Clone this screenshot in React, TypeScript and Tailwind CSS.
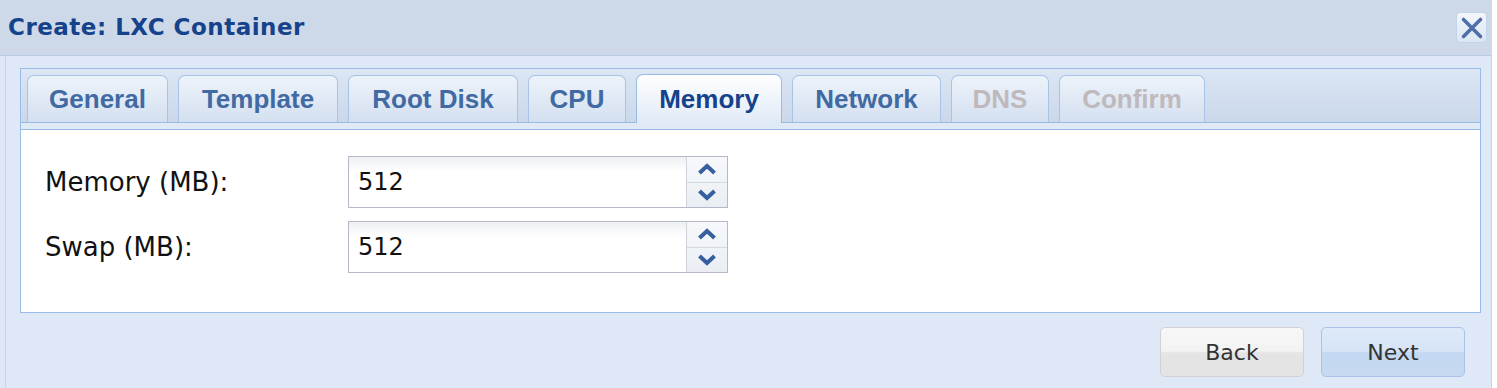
import React from 'react';

const tabs = [
  { label: 'General', w: 'w-[141px]', state: 'idle' },
  { label: 'Template', w: 'w-[160px]', state: 'idle' },
  { label: 'Root Disk', w: 'w-[170px]', state: 'idle' },
  { label: 'CPU', w: 'w-[98px]', state: 'idle' },
  { label: 'Memory', w: 'w-[146px]', state: 'active' },
  { label: 'Network', w: 'w-[149px]', state: 'idle' },
  { label: 'DNS', w: 'w-[98px]', state: 'disabled' },
  { label: 'Confirm', w: 'w-[146px]', state: 'disabled' },
];

function Tab({ label, w, state }: { label: string; w: string; state: string }) {
  if (state === 'active') {
    return (
      <div
        className={`${w} h-[49px] -mb-[1px] flex items-center justify-center rounded-t-[7px] border border-b-0 border-[#99bbe8] bg-gradient-to-b from-white to-[#e0eaf7] text-[#15428b]`}
      >
        {label}
      </div>
    );
  }
  return (
    <div
      className={`${w} h-[47px] flex items-center justify-center rounded-t-[7px] border border-b-0 border-[#a9c3e6] bg-gradient-to-b from-[#edf3fa] to-[#d4e0f0] ${
        state === 'disabled' ? 'text-[#bfb9bd]' : 'text-[#416aa3]'
      }`}
    >
      {label}
    </div>
  );
}

function SpinField({ label, value }: { label: string; value: string }) {
  return (
    <div className="flex items-center h-[52px]">
      <div className="w-[327px] pl-[24px] text-[26px] text-[#111]">{label}</div>
      <div className="flex h-[52px] border border-[#b5b8c8]">
        <div className="w-[337px] h-full flex items-center pl-[9px] text-[24px] text-[#111] bg-gradient-to-b from-[#eef0f3] via-white via-[30%] to-white">
          {value}
        </div>
        <div className="w-[41px] h-full flex flex-col border-l border-[#d0d4dc] bg-gradient-to-b from-[#f6f8fb] to-[#eaeef4]">
          <div className="flex-1 flex items-center justify-center border-b border-[#d4d8e0]">
            <svg width="20" height="12" viewBox="0 0 20 12">
              <path d="M2.5 10 L10 3 L17.5 10" fill="none" stroke="#365f9f" strokeWidth="4" />
            </svg>
          </div>
          <div className="flex-1 flex items-center justify-center">
            <svg width="20" height="12" viewBox="0 0 20 12">
              <path d="M2.5 2 L10 9 L17.5 2" fill="none" stroke="#365f9f" strokeWidth="4" />
            </svg>
          </div>
        </div>
      </div>
    </div>
  );
}

export default function App() {
  return (
    <div className="w-[1497px] h-[388px] bg-white overflow-hidden font-['DejaVu_Sans',sans-serif]">
      <div className="w-[1492px] h-full flex flex-col bg-[#dfe8f6]">
        {/* header */}
        <div className="h-[56px] shrink-0 flex items-center justify-between pl-[8px] pr-[5px] bg-[#cdd9e8] border-b border-[#b8cbe3]">
          <div className="text-[23px] font-bold text-[#15428b] tracking-[0.5px]">Create: LXC Container</div>
          <div className="w-[31px] h-[31px] flex items-center justify-center rounded-[4px] border border-[#c3d4ea] bg-gradient-to-b from-[#f4f7fb] to-[#dbe5f2]">
            <svg width="24" height="24" viewBox="0 0 24 24">
              <path d="M3.5 3.5 L20.5 20.5 M20.5 3.5 L3.5 20.5" stroke="#4f6fa9" strokeWidth="3.6" strokeLinecap="round" />
            </svg>
          </div>
        </div>

        {/* body */}
        <div className="flex-1 flex flex-col ml-[5px] border-l border-r border-[#c3d4ec] pl-[14px] pr-[10px] pt-[12px]">
          <div className="border border-[#99bbe8] flex flex-col">
            <div className="h-[54px] flex items-end gap-[10px] pl-[6px] border-b border-[#99bbe8] bg-gradient-to-b from-[#dce6f4] to-[#cad8ea] font-['Liberation_Sans',Arial,sans-serif] font-bold text-[26px]">
              {tabs.map((t) => (
                <Tab key={t.label} {...t} />
              ))}
            </div>
            <div className="h-[7px] bg-[#e0eaf7] border-b border-[#99bbe8]" />
            <div className="h-[182px] bg-white flex flex-col gap-[13px] pt-[26px]">
              <SpinField label="Memory (MB):" value="512" />
              <SpinField label="Swap (MB):" value="512" />
            </div>
          </div>

          <div className="flex justify-end gap-[17px] pr-[16px] mt-[14px]">
            <button className="w-[144px] h-[50px] rounded-[5px] border border-[#d2d2d2] bg-[linear-gradient(#f7f7f7_0%,#f3f3f3_48%,#e4e4e4_52%,#e4e4e4_100%)] text-[22px] text-[#333]">
              Back
            </button>
            <button className="w-[144px] h-[50px] rounded-[5px] border border-[#a9c4e6] bg-[linear-gradient(#deeaf9_0%,#d6e4f6_48%,#c4d8f1_52%,#c6d9f1_100%)] text-[22px] text-[#333]">
              Next
            </button>
          </div>
        </div>
      </div>
    </div>
  );
}
